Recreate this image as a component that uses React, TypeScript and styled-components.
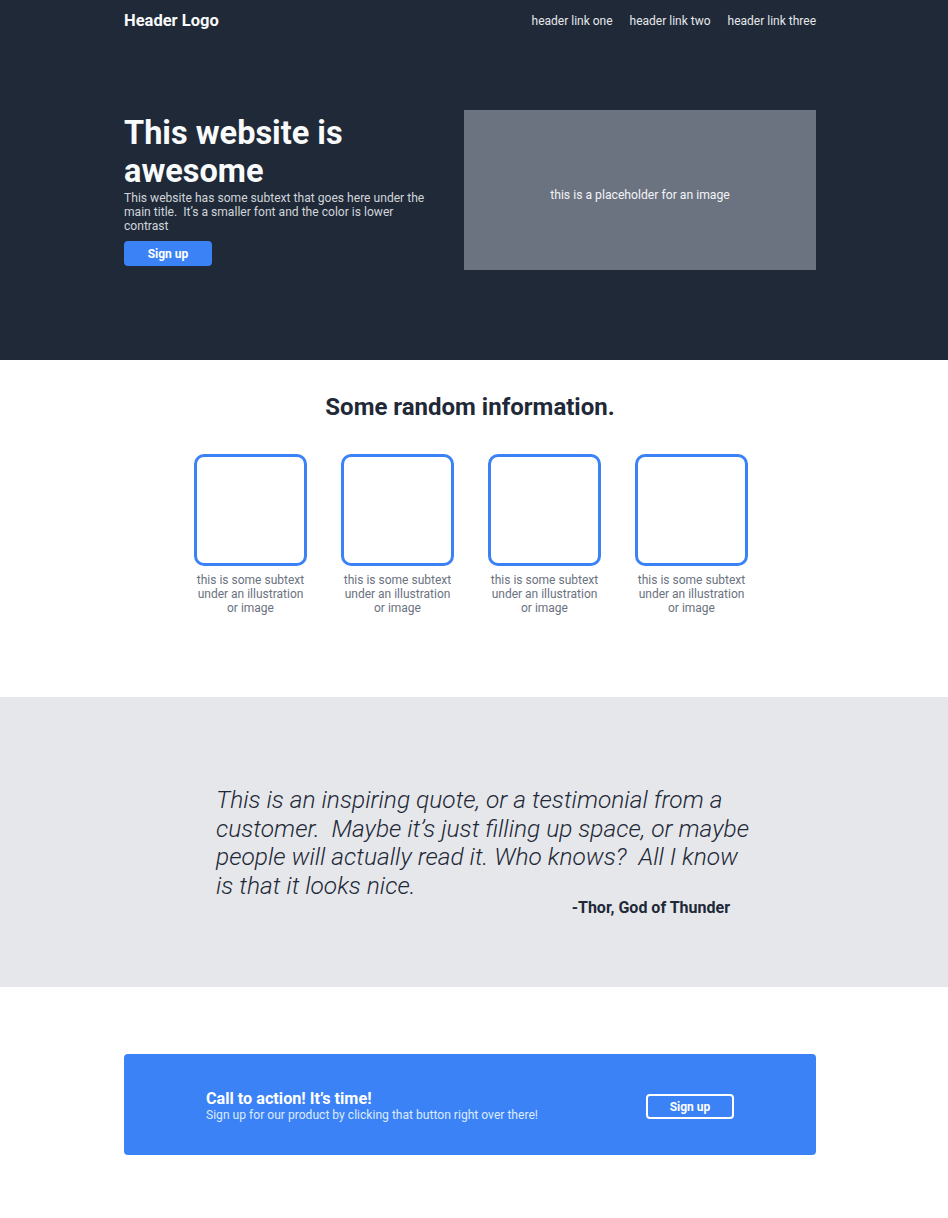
import React from "react";
import styled, { createGlobalStyle } from "styled-components";

const Global = createGlobalStyle`
  * { box-sizing: border-box; }
  body { margin: 0; font-family: Roboto, "Liberation Sans", sans-serif; background: #ffffff; }
`;

const Band = styled.section`
  padding-right: 8px;
`;

const Hero = styled(Band)`
  background: #1f2937;
  height: 360px;
`;

const Container = styled.div`
  width: 692px;
  margin: 0 auto;
`;

const Nav = styled(Container)`
  height: 41px;
  display: flex;
  align-items: center;
  justify-content: space-between;
`;

const Logo = styled.div`
  color: #f9fafb;
  font-weight: 700;
  font-size: 16.5px;
`;

const Links = styled.nav`
  display: flex;
  gap: 17px;
`;

const NavLink = styled.a`
  color: #e5e7eb;
  font-size: 12px;
  text-decoration: none;
`;

const HeroBody = styled(Container)`
  margin-top: 69px;
  display: flex;
  align-items: center;
  justify-content: space-between;
`;

const HeroText = styled.div`
  width: 310px;
`;

const HeroTitle = styled.h1`
  margin: 0;
  color: #f9fafb;
  font-size: 32.5px;
  line-height: 38px;
  font-weight: 700;
`;

const HeroSub = styled.p`
  margin: 1px 0 8px;
  color: #d1d5db;
  font-size: 12.1px;
  line-height: 14px;
  white-space: pre-wrap;
`;

const PrimaryButton = styled.button`
  display: block;
  width: 88px;
  height: 25px;
  border: none;
  border-radius: 4px;
  background: #3b82f6;
  color: #ffffff;
  font-family: inherit;
  font-weight: 700;
  font-size: 12px;
`;

const ImagePlaceholder = styled.div`
  width: 352px;
  height: 160px;
  padding-top: 10px;
  background: #6b7280;
  display: flex;
  align-items: center;
  justify-content: center;
  color: #f3f4f6;
  font-size: 12.2px;
`;

const InfoSection = styled(Band)`
  padding-top: 33px;
  padding-bottom: 82px;
  display: flex;
  flex-direction: column;
  align-items: center;
`;

const SectionTitle = styled.h2`
  margin: 0 0 33px;
  color: #1f2937;
  font-size: 24px;
  line-height: 28px;
  font-weight: 700;
`;

const Cards = styled.div`
  display: flex;
  gap: 34px;
  margin-left: 2px;
`;

const Card = styled.div`
  width: 113px;
  display: flex;
  flex-direction: column;
  align-items: center;
`;

const IllustrationBox = styled.div`
  width: 113px;
  height: 112px;
  border: 3px solid #3b82f6;
  border-radius: 10px;
`;

const Caption = styled.p`
  margin: 7px 0 0;
  text-align: center;
  color: #6b7280;
  font-size: 12px;
  line-height: 14px;
`;

const QuoteSection = styled(Band)`
  background: #e5e7eb;
  padding-top: 89px;
  padding-bottom: 70px;
`;

const QuoteBox = styled.figure`
  width: 545px;
  margin: 0 0 0 216px;
`;

const Quote = styled.blockquote`
  margin: 0;
  color: #1f2937;
  font-style: italic;
  font-weight: 300;
  font-size: 24.5px;
  line-height: 28.5px;
  white-space: pre-wrap;
`;

const Author = styled.figcaption`
  margin-top: -2px;
  text-align: right;
  padding-right: 31px;
  color: #1f2937;
  font-weight: 700;
  font-size: 16px;
  line-height: 19px;
`;

const CtaSection = styled(Band)`
  padding-top: 67px;
  padding-bottom: 63px;
`;

const CtaBox = styled(Container)`
  height: 101px;
  background: #3b82f6;
  border-radius: 4px;
  padding: 4px 82px 0;
  display: flex;
  align-items: center;
  justify-content: space-between;
`;

const CtaTitle = styled.h3`
  margin: -2px 0 0;
  color: #ffffff;
  font-size: 16.2px;
  line-height: 19px;
  font-weight: 700;
`;

const CtaSub = styled.p`
  margin: 0;
  color: #dbeafe;
  font-size: 12.1px;
  line-height: 14px;
`;

const OutlineButton = styled.button`
  width: 88px;
  height: 25px;
  border: 2px solid #ffffff;
  border-radius: 4px;
  background: transparent;
  color: #ffffff;
  font-family: inherit;
  font-weight: 700;
  font-size: 12px;
`;

const captions = [0, 1, 2, 3];

export default function App() {
  return (
    <>
      <Global />
      <Hero>
        <Nav>
          <Logo>Header Logo</Logo>
          <Links>
            <NavLink>header link one</NavLink>
            <NavLink>header link two</NavLink>
            <NavLink>header link three</NavLink>
          </Links>
        </Nav>
        <HeroBody>
          <HeroText>
            <HeroTitle>This website is awesome</HeroTitle>
            <HeroSub>
              This website has some subtext that goes here under the main title.  It’s a smaller font and the color is lower contrast
            </HeroSub>
            <PrimaryButton>Sign up</PrimaryButton>
          </HeroText>
          <ImagePlaceholder>this is a placeholder for an image</ImagePlaceholder>
        </HeroBody>
      </Hero>
      <InfoSection>
        <SectionTitle>Some random information.</SectionTitle>
        <Cards>
          {captions.map((i) => (
            <Card key={i}>
              <IllustrationBox />
              <Caption>this is some subtext under an illustration or image</Caption>
            </Card>
          ))}
        </Cards>
      </InfoSection>
      <QuoteSection>
        <QuoteBox>
          <Quote>
            This is an inspiring quote, or a testimonial from a customer.  Maybe it’s just filling up space, or maybe people will actually read it. Who knows?  All I know is that it looks nice.
          </Quote>
          <Author>-Thor, God of Thunder</Author>
        </QuoteBox>
      </QuoteSection>
      <CtaSection>
        <CtaBox>
          <div>
            <CtaTitle>Call to action! It’s time!</CtaTitle>
            <CtaSub>Sign up for our product by clicking that button right over there!</CtaSub>
          </div>
          <OutlineButton>Sign up</OutlineButton>
        </CtaBox>
      </CtaSection>
    </>
  );
}
